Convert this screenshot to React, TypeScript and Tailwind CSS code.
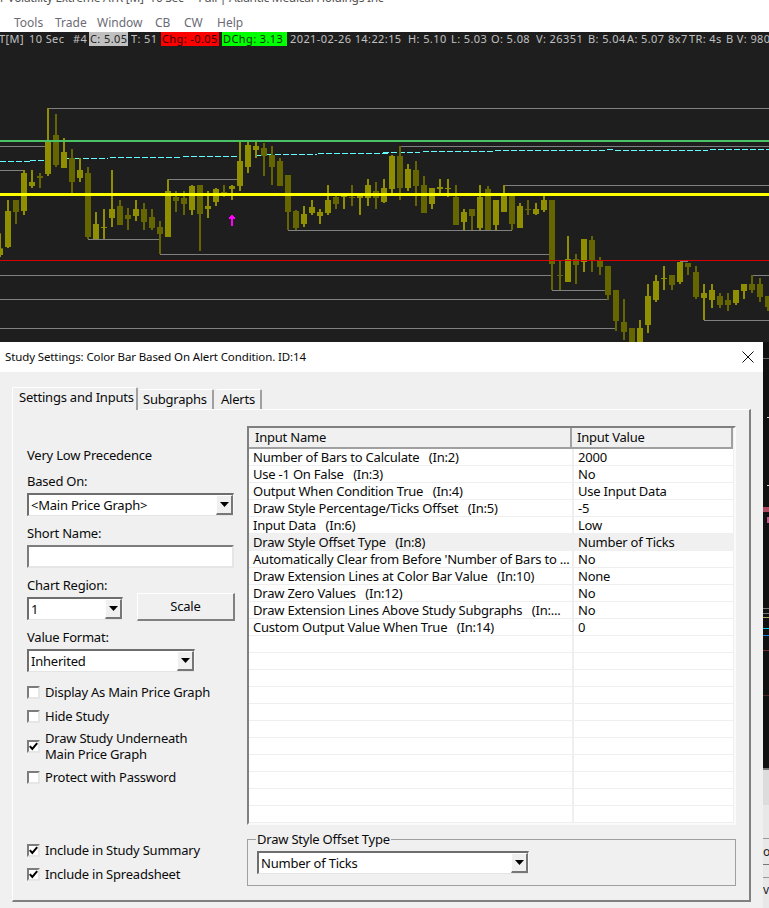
import React from "react";

const B = "#8f8f00";
const D = "#666600";

// x, wick top, body top, body bottom, wick bottom (measured at 3x from chart top reference), colour
const candles: [number, number, number, number, number, string][] = [
  [0, 340, 385, 405, 411, B], [8, 240, 273, 381, 384, B], [16, 240, 240, 276, 312, D], [24, 150, 159, 273, 285, B],
  [32, 150, 186, 198, 204, B], [40, 159, 168, 174, 204, D], [48, -36, 63, 162, 168, B], [56, -18, 45, 135, 141, D],
  [64, 54, 96, 144, 144, B], [72, 87, 114, 186, 220, D], [80, 114, 150, 174, 186, B], [88, 141, 159, 351, 357, D],
  [96, 276, 312, 357, 357, B], [104, 267, 321, 324, 357, B], [112, 150, 267, 294, 321, B], [120, 240, 258, 315, 315, D],
  [128, 264, 285, 297, 330, D], [136, 240, 267, 288, 303, B], [144, 249, 267, 306, 330, D], [152, 267, 291, 324, 330, D],
  [160, 303, 321, 342, 402, D], [168, 178, 213, 351, 351, B], [176, 213, 231, 243, 276, D], [184, 213, 234, 252, 285, D],
  [192, 195, 198, 270, 285, B], [200, 195, 195, 282, 393, D], [208, 213, 258, 267, 294, B], [216, 204, 207, 246, 258, B],
  [224, 195, 216, 219, 231, D], [232, 195, 198, 207, 240, B], [240, 63, 123, 198, 213, B], [248, 63, 75, 141, 159, B],
  [256, 63, 78, 90, 114, B], [264, 69, 84, 108, 168, D], [272, 78, 105, 141, 195, D], [280, 114, 123, 198, 198, D],
  [288, 165, 165, 276, 330, D], [296, 270, 273, 324, 330, D], [304, 258, 282, 312, 321, B], [312, 240, 261, 279, 285, B],
  [320, 267, 276, 288, 312, B], [328, 195, 240, 279, 285, B], [336, 222, 231, 252, 267, D], [344, 222, 225, 231, 267, B],
  [352, 195, 231, 234, 258, D], [360, 219, 225, 234, 285, B], [368, 177, 195, 234, 258, B], [376, 186, 213, 234, 267, D],
  [384, 177, 204, 246, 249, B], [392, 105, 108, 207, 222, B], [400, 78, 108, 204, 240, D], [408, 132, 147, 204, 213, B],
  [416, 123, 150, 198, 258, D], [424, 168, 195, 279, 279, D], [432, 204, 204, 252, 267, B], [440, 177, 201, 207, 222, B],
  [448, 177, 204, 204, 231, B], [456, 195, 231, 315, 315, D], [464, 267, 276, 306, 330, B], [472, 267, 267, 288, 330, D],
  [480, 195, 231, 324, 330, B], [488, 198, 207, 330, 330, D], [496, 240, 240, 315, 330, B], [504, 195, 222, 276, 276, B],
  [512, 222, 228, 312, 330, D], [520, 249, 258, 324, 324, B], [528, 240, 267, 270, 285, D], [536, 249, 267, 282, 285, B],
  [544, 228, 240, 270, 276, B], [552, 240, 240, 432, 510, D], [560, 423, 465, 468, 510, D], [568, 348, 417, 486, 486, B],
  [576, 402, 417, 435, 492, D], [584, 357, 357, 426, 456, B], [592, 348, 360, 420, 456, D], [600, 411, 420, 441, 465, D],
  [608, 438, 438, 525, 540, D], [616, 510, 510, 603, 633, D], [624, 537, 606, 636, 660, D], [632, 624, 624, 680, 680, D],
  [640, 600, 624, 680, 680, B], [648, 492, 528, 615, 639, B], [656, 465, 483, 540, 546, B], [664, 438, 474, 477, 510, B],
  [672, 465, 465, 495, 510, D], [680, 426, 426, 486, 492, B], [688, 429, 429, 441, 465, D], [696, 438, 456, 531, 537, D],
  [704, 492, 519, 534, 600, B], [712, 492, 510, 540, 564, B], [720, 519, 528, 555, 564, D], [728, 519, 540, 555, 573, D],
  [736, 510, 510, 549, 555, B], [744, 492, 492, 513, 537, B], [752, 465, 492, 510, 519, D], [760, 474, 492, 531, 546, D],
  [768, 528, 528, 561, 573, D],
];

// y, x1, x2 in page pixels
const greyLines: [number, number, number][] = [
  [108, 47, 769], [146, 0, 48], [146, 400, 769], [141, 256, 400], [170, 0, 24], [179, 168, 240], [239, 88, 160],
  [254, 160, 553], [230, 288, 512], [275, 0, 553], [275, 752, 769], [299, 0, 608], [328, 0, 616], [290, 552, 608],
  [185, 504, 769], [320, 704, 769], [261, 680, 688],
];

const cyanLines: [number, number, number][] = [
  [161, 0, 30], [160, 30, 45], [158, 67, 108], [157, 110, 180], [156, 183, 240], [155, 257, 267], [154, 267, 317],
  [153, 318, 390], [152, 383, 420], [151, 423, 493], [150, 495, 605], [149, 607, 613], [150, 615, 708], [149, 710, 769],
];

const infoItems = [
  { text: "T[M]", cls: "w-[30px] -ml-[1px]" },
  { text: "10 Sec", cls: "w-[44px]" },
  { text: "#4", cls: "w-[16px]" },
  { text: "C: 5.05", cls: "w-[39px] bg-[#c0c0c0] text-[#222] mr-[3px] pl-[1px]" },
  { text: "T: 51", cls: "w-[30px]" },
  { text: "Chg: -0.05", cls: "w-[58px] bg-[#ff0000] text-[#300] mr-[3px] pl-[1px]" },
  { text: "DChg: 3.13", cls: "w-[65px] bg-[#00ff00] text-[#030] mr-[3px] pl-[1px]" },
  { text: "2021-02-26 14:22:15", cls: "w-[118px]" },
  { text: "H: 5.10", cls: "w-[43px]" },
  { text: "L: 5.03", cls: "w-[40px]" },
  { text: "O: 5.08", cls: "w-[45px]" },
  { text: "V: 26351", cls: "w-[52px]" },
  { text: "B: 5.04", cls: "w-[39px]" },
  { text: "A: 5.07", cls: "w-[41px]" },
  { text: "8x7", cls: "w-[21px]" },
  { text: "TR: 4s", cls: "w-[37px]" },
  { text: "B V: 9800", cls: "w-[60px]" },
];

const rows: [string, string, string][] = [
  ["Number of Bars to Calculate", "(In:2)", "2000"],
  ["Use -1 On False", "(In:3)", "No"],
  ["Output When Condition True", "(In:4)", "Use Input Data"],
  ["Draw Style Percentage/Ticks Offset", "(In:5)", "-5"],
  ["Input Data", "(In:6)", "Low"],
  ["Draw Style Offset Type", "(In:8)", "Number of Ticks"],
  ["Automatically Clear from Before 'Number of Bars to ...", "", "No"],
  ["Draw Extension Lines at Color Bar Value", "(In:10)", "None"],
  ["Draw Zero Values", "(In:12)", "No"],
  ["Draw Extension Lines Above Study Subgraphs", "(In:...", "No"],
  ["Custom Output Value When True", "(In:14)", "0"],
  ["", "", ""], ["", "", ""], ["", "", ""], ["", "", ""], ["", "", ""], ["", "", ""],
  ["", "", ""], ["", "", ""], ["", "", ""], ["", "", ""], ["", "", ""],
];

const zy = (z: number) => 74 + z / 3;

const Chart = () => (
  <svg width={769} height={296} className="block bg-[#1e1e1e]">
    {greyLines.map(([y, a, b], i) => (
      <rect key={i} x={a} y={y - 46} width={b - a} height={1} fill="#808080" />
    ))}
    {cyanLines.map(([y, a, b], i) => (
      <line key={i} x1={a} x2={b} y1={y - 45.5} y2={y - 45.5} stroke="#66ffff" strokeDasharray="6 2" />
    ))}
    {candles.map(([x, wt, bt, bb, wb, c], i) => (
      <g key={i} fill={c}>
        <rect x={x - 1} y={zy(wt)} width={2} height={(wb - wt) / 3} />
        <rect x={x - 3} y={zy(bt)} width={6} height={Math.max((bb - bt) / 3, 1)} />
      </g>
    ))}
    <rect x={0} y={94} width={769} height={2} fill="#4cc266" />
    <rect x={0} y={147} width={769} height={3} fill="#ffff00" />
    <rect x={0} y={214} width={769} height={1} fill="#d80000" />
    <g fill="#ff00ff">
      <rect x={231} y={171} width={2} height={9} />
      <rect x={229} y={171} width={6} height={2} />
      <rect x={230} y={170} width={4} height={1} />
      <rect x={231} y={169} width={2} height={1} />
    </g>
  </svg>
);

const Arrow = () => (
  <svg width={9} height={5} className="block">
    <path d="M0 0H9L4.5 5Z" fill="#000" />
  </svg>
);

const Select = ({ value, className }: { value: string; className: string }) => (
  <div className={`flex h-[23px] items-stretch border-t-2 border-l-2 border-r border-b border-t-[#6e6e6e] border-l-[#6e6e6e] border-r-[#f8f8f8] border-b-[#e4e4e4] bg-white ${className}`}>
    <span className="flex-1 pl-[2px] leading-[20px] whitespace-nowrap">{value}</span>
    <span className="flex w-[17px] items-center justify-center border-t border-l border-r-2 border-b-2 border-t-white border-l-white border-r-[#777] border-b-[#777] bg-[#f0f0f0]">
      <Arrow />
    </span>
  </div>
);

const Check = ({ checked }: { checked?: boolean }) => (
  <span className="flex h-[13px] w-[13px] shrink-0 items-center justify-center border-2 border-t-[#7c7c7c] border-l-[#7c7c7c] border-r-[#e6e6e6] border-b-[#e6e6e6] bg-white">
    {checked && (
      <svg width={9} height={9} viewBox="0 0 9 9">
        <path d="M0.8 4.2L3.3 7L8.2 1.2" fill="none" stroke="#000" strokeWidth={2} />
      </svg>
    )}
  </span>
);

const CheckRow = ({ label, checked, className }: { label: string; checked?: boolean; className: string }) => (
  <div className={`flex h-[16px] items-center gap-[5px] leading-[16px] whitespace-nowrap ${className}`}>
    <Check checked={checked} />
    <span>{label}</span>
  </div>
);

const Label = ({ text, className }: { text: string; className: string }) => (
  <div className={`h-[16px] leading-[16px] whitespace-nowrap ${className}`}>{text}</div>
);

const ParamTable = () => (
  <div className="h-[399px] w-[489px] border-2 border-t-[#808080] border-l-[#808080] border-r-[#fafafa] border-b-[#fafafa] bg-white">
    <div className="flex h-[21px] bg-[#f0f0f0]">
      <div className="w-[323px] border-r-2 border-b-2 border-r-[#a0a0a0] border-b-[#a0a0a0] pl-[6px] leading-[19px]">Input Name</div>
      <div className="w-[161px] border-r-2 border-b-2 border-r-[#a0a0a0] border-b-[#a0a0a0] pl-[5px] leading-[19px]">Input Value</div>
    </div>
    {rows.map(([name, tag, value], i) => (
      <div key={i} className={`flex h-[17px] border-b border-b-[#efefef] leading-[16px] ${i === 5 ? "bg-[#f0f0f0]" : ""}`}>
        <div className="w-[323px] overflow-hidden pl-[4px] whitespace-pre">
          {name}
          {tag ? `   ${tag}` : ""}
        </div>
        <div className="w-[161px] border-l-2 border-l-[#efefef] pl-[4px] whitespace-nowrap">{value}</div>
        <div className="w-px bg-[#efefef]" />
      </div>
    ))}
  </div>
);

const Dialog = () => (
  <div className="h-[566px] w-[763px] bg-[#f0f0f0] text-[13px] tracking-[-0.22px] text-[#0a0a0a]">
    <div className="flex h-[30px] items-center justify-between bg-white pl-[5px] pr-[9px] text-[11.5px] tracking-[-0.12px]">
      <span>Study Settings: Color Bar Based On Alert Condition. ID:14</span>
      <svg width={12} height={12} viewBox="0 0 12 12">
        <path d="M0.5 0.5L11.5 11.5M11.5 0.5L0.5 11.5" stroke="#111" strokeWidth={1} />
      </svg>
    </div>
    <div className="flex h-[37px] items-end pl-[12px] whitespace-nowrap">
      <div className="relative z-10 -mb-px h-[23px] w-[126px] rounded-t-[2px] border-t border-l border-r-2 border-t-white border-l-white border-r-[#a0a0a0] bg-[#f0f0f0] pl-[6px] leading-[18px]">
        Settings and Inputs
      </div>
      <div className="ml-px h-[20px] w-[75px] rounded-t-[2px] border-t border-r-2 border-t-white border-r-[#a0a0a0] pl-[4px] leading-[19px]">
        Subgraphs
      </div>
      <div className="ml-[2px] h-[20px] w-[46px] rounded-t-[2px] border-t border-r-2 border-t-white border-r-[#a0a0a0] pl-[5px] leading-[19px]">
        Alerts
      </div>
    </div>
    <div className="ml-[12px] flex h-[493px] w-[739px] border-t border-l border-r-2 border-b-2 border-t-white border-l-white border-r-[#808080] border-b-[#808080]">
      <div className="flex w-[234px] flex-col pl-[14px]">
        <Label text="Very Low Precedence" className="mt-[37px]" />
        <Label text="Based On:" className="mt-[10px]" />
        <Select value="<Main Price Graph>" className="mt-[4px] w-[207px]" />
        <Label text="Short Name:" className="mt-[9px]" />
        <div className="mt-[4px] h-[23px] w-[207px] border-2 border-t-[#7c7c7c] border-l-[#7c7c7c] border-r-[#e6e6e6] border-b-[#e6e6e6] bg-white" />
        <Label text="Chart Region:" className="mt-[9px]" />
        <div className="flex h-[28px] items-start">
          <Select value="1" className="mt-[4px] w-[96px]" />
          <button className="ml-[14px] h-[28px] w-[98px] border-r-2 border-b-2 border-t border-l border-r-[#808080] border-b-[#808080] border-t-white border-l-white bg-[#f0f0f0]">
            Scale
          </button>
        </div>
        <Label text="Value Format:" className="mt-[8px]" />
        <Select value="Inherited" className="mt-[4px] w-[168px]" />
        <CheckRow label="Display As Main Price Graph" className="mt-[12px]" />
        <CheckRow label="Hide Study" className="mt-[8px]" />
        <div className="mt-[6px] flex h-[32px] items-center gap-[5px] leading-[16px] whitespace-nowrap">
          <Check checked />
          <span>
            Draw Study Underneath
            <br />
            Main Price Graph
          </span>
        </div>
        <CheckRow label="Protect with Password" className="mt-[7px]" />
        <CheckRow label="Include in Study Summary" checked className="mt-[57px]" />
        <CheckRow label="Include in Spreadsheet" checked className="mt-[8px]" />
      </div>
      <div className="flex flex-col pt-[16px]">
        <ParamTable />
        <fieldset className="mt-[6px] h-[55px] w-[489px] border border-[#a0a0a0] pl-[8px]">
          <legend className="px-[1px] leading-[16px]">Draw Style Offset Type</legend>
          <Select value="Number of Ticks" className="mt-[4px] ml-px w-[272px]" />
        </fieldset>
      </div>
    </div>
  </div>
);

const RightStrip = () => (
  <div className="flex h-[566px] w-[6px] flex-col bg-[#111]">
    <svg width={6} height={426} className="block shrink-0">
      <rect x={0} y={16} width={6} height={1} fill="#666" />
      <rect x={4} y={75} width={2} height={1} fill="#ddd" />
      <rect x={4} y={143} width={2} height={1} fill="#ddd" />
      <rect x={0} y={165} width={6} height={5} fill="#b04a60" />
      <rect x={4} y={175} width={2} height={6} fill="#c05a90" />
      <rect x={0} y={266} width={6} height={1} fill="#777" />
      <rect x={0} y={271} width={6} height={1} fill="#777" />
      <rect x={0} y={275} width={6} height={1} fill="#b0a860" />
      <rect x={0} y={286} width={6} height={1} fill="#00c8e0" />
      <rect x={0} y={293} width={6} height={1} fill="#2080e0" />
      <rect x={0} y={308} width={6} height={1} fill="#703030" />
      <rect x={0} y={353} width={6} height={1} fill="#502828" />
    </svg>
    <div className="flex-1 overflow-hidden bg-[#e8e8e8] text-[12px] leading-[16px] text-[#222]">
      <div className="h-[2px] bg-[#777]" />
      <div className="h-[35px] bg-[#dcdcdc]" />
      <div className="h-[33px] bg-[#e8e8e8]" />
      <div className="h-[26px] border-t border-t-[#999] pt-[5px]">ov</div>
      <div className="h-[13px] border-t border-t-[#777]" />
      <div className="h-[31px] border-t border-t-[#999] pt-[4px]">ve</div>
    </div>
  </div>
);

export default function App() {
  return (
    <div className="h-[908px] w-[769px] overflow-hidden bg-white font-['Noto_Sans','Open_Sans',sans-serif]">
      <div className="h-[32px] bg-white">
        <div className="h-[6px] overflow-hidden whitespace-pre text-[12px] leading-[12px] tracking-[-0.3px] text-[#555]">
          <div className="-mt-[8px]">{"r Volatility Extreme ATR [M]  10 Sec  -  Full | Atlantic Medical Holdings Inc"}</div>
        </div>
        <div className="mt-[9px] flex h-[16px] text-[12px] leading-[16px] text-[#6b6b75]">
          <span className="ml-[14px] w-[41px]">Tools</span>
          <span className="w-[42px]">Trade</span>
          <span className="w-[58px]">Window</span>
          <span className="w-[29px]">CB</span>
          <span className="w-[33px]">CW</span>
          <span>Help</span>
        </div>
      </div>
      <div className="flex h-[14px] overflow-hidden bg-[#1e1e1e] text-[11px] leading-[14px] tracking-[0.4px] whitespace-nowrap text-[#c0c0c0]">
        {infoItems.map((it) => (
          <span key={it.text} className={`shrink-0 overflow-hidden ${it.cls}`}>
            {it.text}
          </span>
        ))}
      </div>
      <Chart />
      <div className="flex">
        <Dialog />
        <RightStrip />
      </div>
    </div>
  );
}
